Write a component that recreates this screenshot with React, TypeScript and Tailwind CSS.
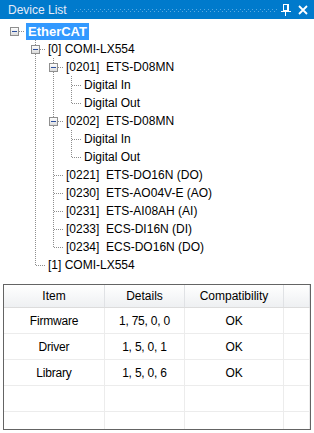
import React from 'react';

type TreeNode = { label: string; children?: TreeNode[] };

type FlatRow = {
  label: string;
  level: number;
  ancestorsLast: boolean[];
  isLast: boolean;
  hasChildren: boolean;
};

const digital = (): TreeNode[] => [{ label: 'Digital In' }, { label: 'Digital Out' }];

const tree: TreeNode = {
  label: 'EtherCAT',
  children: [
    {
      label: '[0] COMI-LX554',
      children: [
        { label: '[0201]  ETS-D08MN', children: digital() },
        { label: '[0202]  ETS-D08MN', children: digital() },
        { label: '[0221]  ETS-DO16N (DO)' },
        { label: '[0230]  ETS-AO04V-E (AO)' },
        { label: '[0231]  ETS-AI08AH (AI)' },
        { label: '[0233]  ECS-DI16N (DI)' },
        { label: '[0234]  ECS-DO16N (DO)' },
      ],
    },
    { label: '[1] COMI-LX554' },
  ],
};

function flatten(node: TreeNode, level: number, ancestorsLast: boolean[], isLast: boolean, out: FlatRow[]) {
  const kids = node.children ?? [];
  out.push({ label: node.label, level, ancestorsLast, isLast, hasChildren: kids.length > 0 });
  kids.forEach((c, i) => flatten(c, level + 1, [...ancestorsLast, isLast], i === kids.length - 1, out));
  return out;
}

const rows = flatten(tree, 0, [], true, []);

const DOT = '#8e8e8e';

function ExpandBox({ x }: { x: number }) {
  return (
    <g>
      <defs>
        <linearGradient id="boxfill" x1="0" y1="0" x2="0" y2="1">
          <stop offset="0" stopColor="#ffffff" />
          <stop offset="1" stopColor="#d9d9d9" />
        </linearGradient>
      </defs>
      <rect x={x - 3.5} y={5.5} width={8} height={8} fill="url(#boxfill)" stroke="#8f8f8f" />
      <line x1={x - 2} y1={9.5} x2={x + 3} y2={9.5} stroke="#2b4f9e" />
    </g>
  );
}

function AncestorCell({ line }: { line: boolean }) {
  return (
    <svg width="18" height="18" className="shrink-0" shapeRendering="crispEdges">
      {line && <line x1="9.5" y1="0" x2="9.5" y2="18" stroke={DOT} strokeDasharray="1 1" />}
    </svg>
  );
}

function OwnCell({ isLast, hasChildren }: { isLast: boolean; hasChildren: boolean }) {
  return (
    <svg width="22" height="18" className="shrink-0" shapeRendering="crispEdges">
      <line x1="9.5" y1="0" x2="9.5" y2={isLast ? 10 : 18} stroke={DOT} strokeDasharray="1 1" />
      <line x1="10" y1="9.5" x2="19" y2="9.5" stroke={DOT} strokeDasharray="1 1" />
      {hasChildren && <ExpandBox x={9} />}
    </svg>
  );
}

function TreeRow({ row }: { row: FlatRow }) {
  if (row.level === 0) {
    return (
      <div className="flex h-[18px] items-start">
        <div className="w-[10px] shrink-0" />
        <svg width="16" height="18" className="shrink-0" shapeRendering="crispEdges">
          <line x1="9" y1="9.5" x2="15" y2="9.5" stroke={DOT} strokeDasharray="1 1" />
          <ExpandBox x={4} />
        </svg>
        <span className="mt-[1px] flex h-[17px] items-center bg-[#3399ff] px-[2px] text-[13px] font-bold leading-none text-white">
          {row.label}
        </span>
      </div>
    );
  }
  return (
    <div className="flex h-[18px] items-center">
      <div className="w-[26px] shrink-0" />
      {row.ancestorsLast.slice(1).map((last, i) => (
        <AncestorCell key={i} line={!last} />
      ))}
      <OwnCell isLast={row.isLast} hasChildren={row.hasChildren} />
      <span className="whitespace-pre text-[12px] leading-none text-black">{row.label}</span>
    </div>
  );
}

function TitleBar() {
  return (
    <div className="flex h-[19px] items-center bg-[#007acc] pl-[8px] pr-[6px]">
      <span className="text-[12px] leading-none text-[#e4ebf8]">Device List</span>
      <svg className="ml-[7px] h-[6px] flex-1" shapeRendering="crispEdges">
        <defs>
          <pattern id="grip" width="4" height="4" patternUnits="userSpaceOnUse">
            <rect x="0" y="0" width="1" height="1" fill="#58a8e2" />
            <rect x="2" y="2" width="1" height="1" fill="#58a8e2" />
          </pattern>
        </defs>
        <rect x="0" y="1" width="100%" height="5" fill="url(#grip)" />
      </svg>
      <svg width="12" height="14" viewBox="0 0 12 14" className="ml-[3px] shrink-0" shapeRendering="crispEdges">
        <rect x="3.5" y="1.5" width="4" height="6" fill="none" stroke="#ffffff" />
        <rect x="7" y="1" width="2" height="7" fill="#ffffff" />
        <rect x="1" y="8" width="10" height="1" fill="#ffffff" />
        <rect x="5" y="9" width="1" height="4" fill="#ffffff" />
      </svg>
      <svg width="10" height="10" viewBox="0 0 10 10" className="ml-[6px] shrink-0">
        <path d="M1 1 L9 9 M9 1 L1 9" stroke="#ffffff" strokeWidth="1.8" />
      </svg>
    </div>
  );
}

const tableRows = [
  ['Firmware', '1, 75, 0, 0', 'OK'],
  ['Driver', '1, 5, 0, 1', 'OK'],
  ['Library', '1, 5, 0, 6', 'OK'],
  ['', '', ''],
  ['', '', ''],
];

const cols = 'grid grid-cols-[101px_80px_99px_1fr]';

function InfoTable() {
  return (
    <div className="mx-[3px] h-[146px] overflow-hidden border border-[#646464] bg-white">
      <div className={`${cols} h-[23px] border-b border-[#dcdcdc] bg-[linear-gradient(to_bottom,#ffffff,#eef0f2)]`}>
        {['Item', 'Details', 'Compatibility', ''].map((h, i) => (
          <div key={i} className="flex items-center justify-center border-r border-[#e0e2e5] text-[12px] text-black">
            {h}
          </div>
        ))}
      </div>
      {tableRows.map((r, ri) => (
        <div key={ri} className={`${cols} h-[26px] border-b border-[#ececec]`}>
          {[...r, ''].map((c, ci) => (
            <div key={ci} className="flex items-center justify-center border-r border-[#ececec] text-[12px] tracking-[-0.2px] text-black">
              {c}
            </div>
          ))}
        </div>
      ))}
    </div>
  );
}

export default function App() {
  return (
    <div className="h-[433px] w-[314px] overflow-hidden bg-white font-['Liberation_Sans',Arial,sans-serif]">
      <TitleBar />
      <div className="pt-[3px]">
        {rows.map((row, i) => (
          <TreeRow key={i} row={row} />
        ))}
      </div>
      <div className="h-[10px]" />
      <InfoTable />
    </div>
  );
}
